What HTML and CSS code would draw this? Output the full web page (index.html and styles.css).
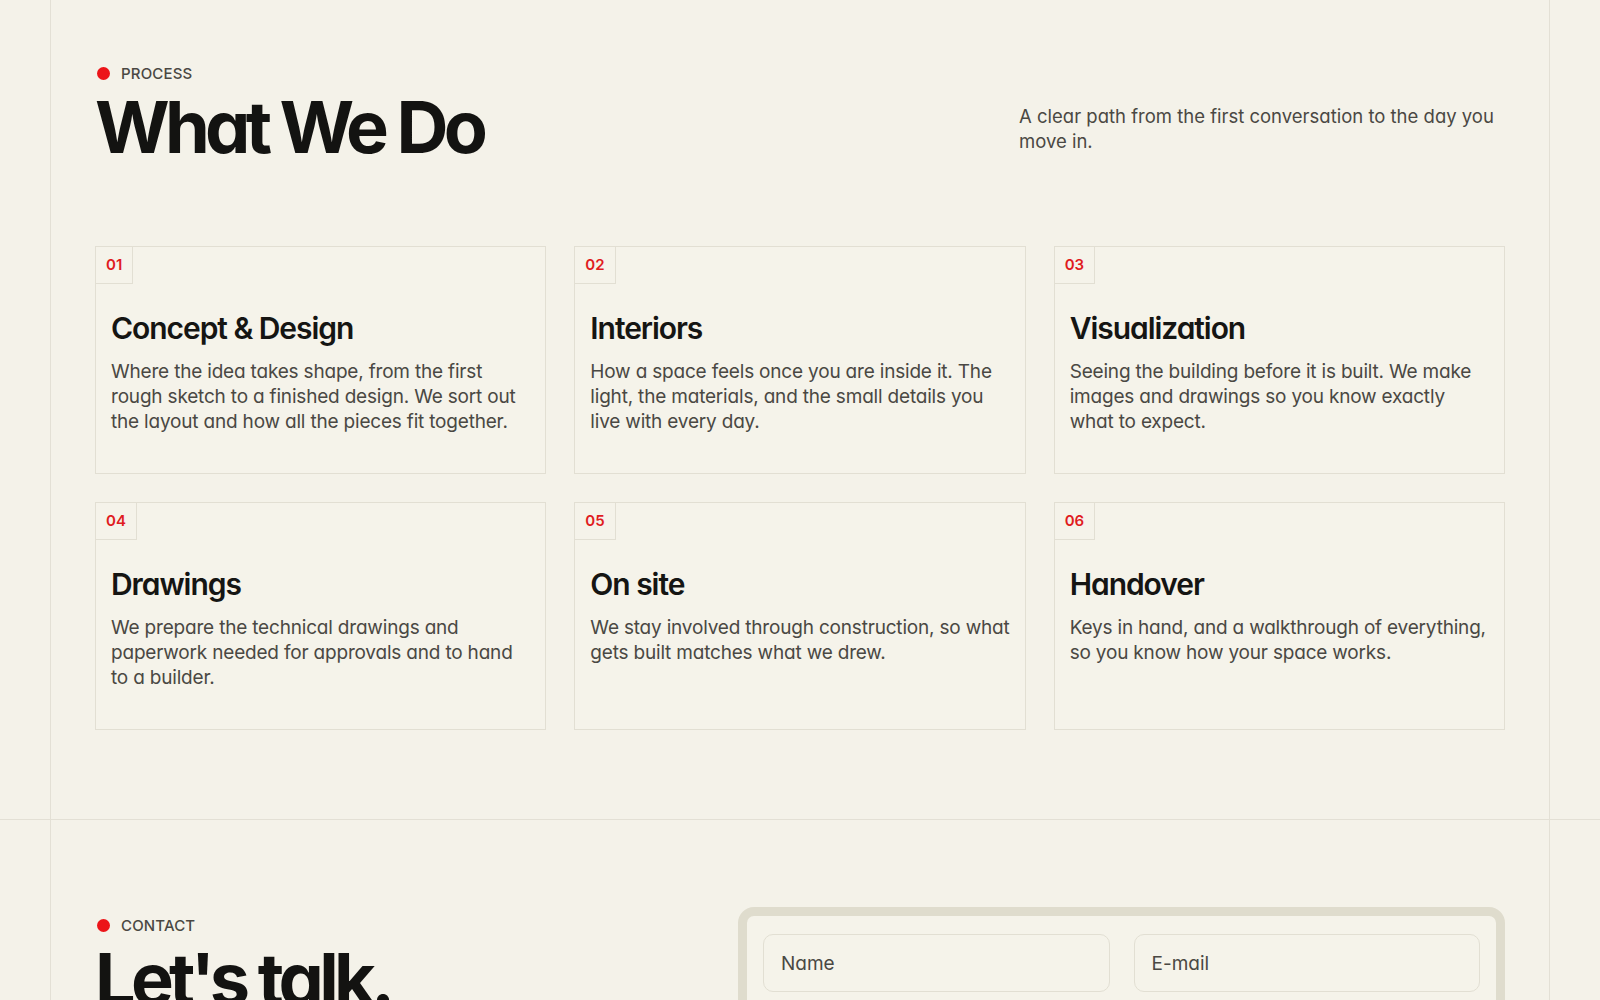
FILE: index.html
```html
<!DOCTYPE html>
<html lang="en">
<head>
    <meta charset="UTF-8">
    <title>Process</title>
    <link rel="stylesheet" href="styles.css">
</head>
<body>
<section class="section">
    <div class="wrap process">
        <div class="section-head">
            <div>
                <span class="label"><i class="dot"></i>PROCESS</span>
                <h2 class="title">What We Do</h2>
            </div>
            <p class="lead">A clear path from the first conversation to the day you move in.</p>
        </div>

        <div class="steps">
            <div class="step">
                <span class="num">01</span>
                <div class="step-body">
                    <h3>Concept &amp; Design</h3>
                    <p>Where the idea takes shape, from the first rough sketch to a finished design. We sort out the layout and how all the pieces fit together.</p>
                </div>
            </div>
            <div class="step">
                <span class="num">02</span>
                <div class="step-body">
                    <h3>Interiors</h3>
                    <p>How a space feels once you are inside it. The light, the materials, and the small details you live with every day.</p>
                </div>
            </div>
            <div class="step">
                <span class="num">03</span>
                <div class="step-body">
                    <h3>Visualization</h3>
                    <p>Seeing the building before it is built. We make images and drawings so you know exactly what to expect.</p>
                </div>
            </div>
            <div class="step">
                <span class="num">04</span>
                <div class="step-body">
                    <h3>Drawings</h3>
                    <p>We prepare the technical drawings and paperwork needed for approvals and to hand to a builder.</p>
                </div>
            </div>
            <div class="step">
                <span class="num">05</span>
                <div class="step-body">
                    <h3>On site</h3>
                    <p>We stay involved through construction, so what gets built matches what we drew.</p>
                </div>
            </div>
            <div class="step">
                <span class="num">06</span>
                <div class="step-body">
                    <h3>Handover</h3>
                    <p>Keys in hand, and a walkthrough of everything, so you know how your space works.</p>
                </div>
            </div>
        </div>
    </div>
</section>

<section class="section">
    <div class="wrap contact">
        <div class="contact-intro">
            <span class="label"><i class="dot"></i>CONTACT</span>
            <h2 class="title">Let's talk.</h2>
        </div>
        <form class="contact-form">
            <div class="form-inner">
                <div class="row">
                    <input type="text" placeholder="Name">
                    <input type="email" placeholder="E-mail">
                </div>
            </div>
        </form>
    </div>
</section>
</body>
</html>
```

FILE: styles.css
```css
body {
    margin: 0;
    background: #f4f2e9;
    color: #4a4843;
    font-family: 'Inter', sans-serif;
    font-feature-settings: "cv11" 1; /* single storey a */
}

.section {
    border-bottom: 1px solid #e3e0d5;
}

.wrap {
    max-width: 1500px;
    margin: 0 auto;
    box-sizing: border-box;
    border-left: 1px solid #e3e0d5;
    border-right: 1px solid #e3e0d5;
    padding: 63px 44px 89px;
}

.label {
    display: flex;
    align-items: center;
    gap: 11px;
    height: 20px;
    font-size: 15px;
    font-weight: 500;
    color: #4a4843;
    letter-spacing: 0.01em;
}

.dot {
    width: 13px;
    height: 13px;
    border-radius: 50%;
    background: #ec1519;
    margin-left: 2px;
}

.title {
    margin: 8px 0 0;
    font-size: 72px;
    line-height: 1;
    font-weight: 700;
    letter-spacing: -0.066em;
    color: #131311;
}

.section-head {
    display: flex;
    justify-content: space-between;
    align-items: flex-end;
    margin-bottom: 83px;
}

.lead {
    width: 486px;
    margin: 0 0 10px;
    font-size: 18.5px;
    line-height: 24.5px;
}

/* six numbered cards */
.steps {
    display: grid;
    grid-template-columns: repeat(3, 1fr);
    gap: 28px;
}

.step {
    height: 228px;
    box-sizing: border-box;
    border: 1px solid #e2dfd3;
    background: #f5f3ea;
}

.num {
    display: inline-block;
    height: 36px;
    line-height: 36px;
    padding: 0 10px;
    border-right: 1px solid #e2dfd3;
    border-bottom: 1px solid #e2dfd3;
    color: #e01c1f;
    font-size: 15px;
    font-weight: 600;
}

.step-body {
    padding: 26px 15px 0 15px;
}

.step h3 {
    margin: 0 0 13px;
    font-size: 30px;
    line-height: 36px;
    font-weight: 600;
    letter-spacing: -0.035em;
    color: #151513;
}

.step p {
    margin: 0;
    font-size: 19px;
    line-height: 25px;
    letter-spacing: -0.01em;
}

/* contact */
.contact {
    display: grid;
    grid-template-columns: 1fr 767px;
    gap: 48px;
    padding-top: 87px;
    height: 180px;
    overflow: hidden;
}

.contact-intro {
    padding-top: 8px;
}

.contact-form {
    border: 9px solid #dfdccd;
    border-radius: 16px;
    background: #f5f3ea;
    height: 200px;
}

.form-inner {
    padding: 18px 16px 16px;
}

.row {
    display: grid;
    grid-template-columns: 1fr 1fr;
    gap: 24px;
}

.row input {
    height: 58px;
    box-sizing: border-box;
    border: 1px solid #e2dfd3;
    border-radius: 10px;
    background: #f5f3ea;
    padding: 0 17px;
    font-family: 'Inter', sans-serif;
    font-feature-settings: "cv11" 1;
    font-size: 19px;
    color: #4a4843;
}

.row input::placeholder {
    color: #4a4843;
}
```
